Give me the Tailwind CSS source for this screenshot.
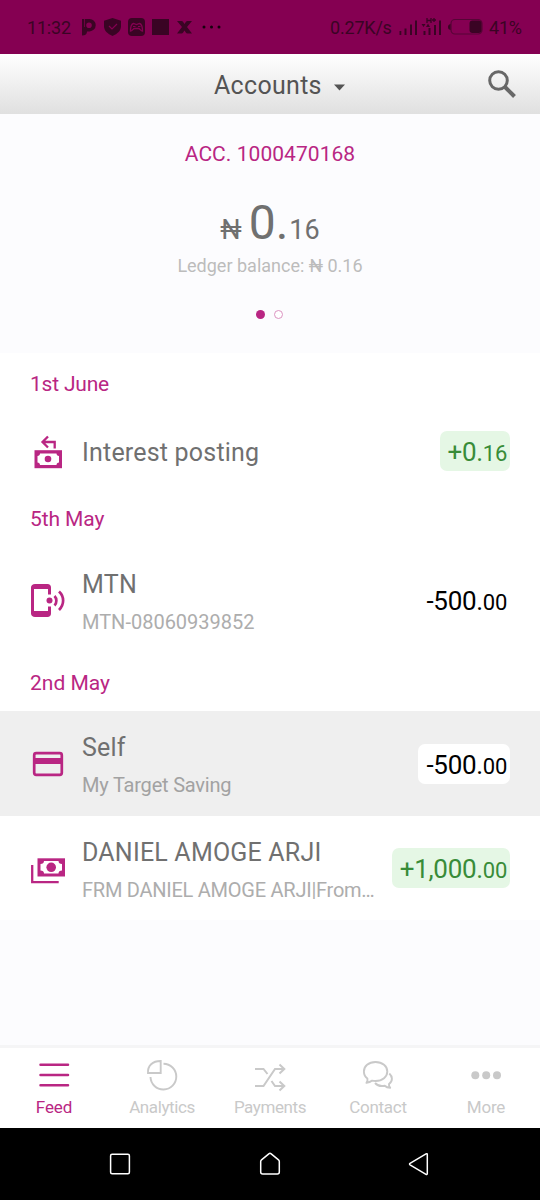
<!DOCTYPE html>
<html lang="en">
<head>
<meta charset="utf-8">
<title>Accounts</title>
<script src="https://cdn.jsdelivr.net/npm/@tailwindcss/browser@4"></script>
</head>
<body class="w-[540px] h-[1200px] flex flex-col overflow-hidden bg-[#fcfcfe] font-['Roboto','Noto_Sans',sans-serif] whitespace-nowrap">
  <!-- Status bar -->
  <div class="h-[54px] shrink-0 bg-[#850052] text-[#3a0424] flex items-center justify-between pl-[27px] pr-[18px] text-[18px] leading-[54px] tracking-[-0.2px]">
    <div class="flex items-center">
      <span class="w-[44px] pt-px">11:32</span>
      <svg class="ml-[9px]" width="146" height="20" viewBox="80 17 146 20" fill="#3a0424">
        <path fill-rule="evenodd" d="M82 19h7.500a6.200 6.200 0 0 1 0 12.400H87c0 2.500-1.500 4-5 4zM89 22.500a2.800 2.800 0 1 0 0 5.600 2.800 2.800 0 0 0 0-5.600z"/>
        <path d="M84.500 19v8" stroke="#850052" stroke-width=".7"/>
        <path d="M112.500 18l8.500 2.800v5.500c0 4.500-3.500 7.500-8.500 9.700-5-2.200-8.500-5.200-8.500-9.700v-5.500z"/><path d="M109 26l3 3 5-5" fill="none" stroke="#850052" stroke-width="1.200"/>
        <rect x="128" y="18" width="17" height="18" rx="4"/>
        <path d="M130.500 31c0-4 1-7 3-7.500l3 1 3-1c2 .5 3 3.500 3 7.500-2 0-2.500-2.500-4-2.500h-4c-1.500 0-2 2.500-4 2.500z" fill="none" stroke="#850052" stroke-width="1.300"/><path d="M133 26.500h2.500M138 26.500h2.500" stroke="#850052" stroke-width="1.200"/>
        <rect x="152" y="19" width="17" height="16"/>
        <path d="M177 21h4.500c1.500 0 2 1.500 3 3 1-1.500 1.500-3 3-3h4.500l-5 6 5 6.500h-4.500c-1.500 0-2-1.500-3-3-1 1.500-1.500 3-3 3H177l5-6.500z"/>
        <g fill="#16010d"><circle cx="204" cy="27" r="1.500"/><circle cx="211.500" cy="27" r="1.500"/><circle cx="219" cy="27" r="1.500"/></g>
      </svg>
    </div>
    <div class="flex items-center">
      <span class="w-[62px] pt-px">0.27K/s</span>
      <svg class="ml-[6px] mr-[5px]" width="86" height="20" viewBox="398 17 86 20" fill="#3a0424">
        <path d="M399.500 31h1.800v4h-1.800zM404.500 28.500h2v6.500h-2zM410 24.500h2V35h-2zM415 20.500h2V35h-2z"/>
        <path d="M423.500 31h2v4h-2zM428.500 28h2v7h-2zM434 25h2v10h-2zM439 20.500h2V35h-2zM421.500 24h4l-2 3zM426 27l2-3.500 2 3.500z"/>
        <path d="M427 18v5M431 18v5M427 20.500h4M434 18v4M432 20h4" stroke="#3a0424" stroke-width="1.300" fill="none"/>
        <rect x="451" y="19.500" width="31" height="14.500" rx="4" fill="none" stroke="#560536" stroke-width="1.200"/>
        <path d="M450.500 24v6c-2-.5-2.500-1.500-2.500-3s.5-2.500 2.500-3z"/><rect x="469.500" y="20.500" width="12" height="12.500" rx="3"/>
      </svg>
      <span class="w-[33px] pt-px">41%</span>
    </div>
  </div>

  <!-- Header -->
  <header class="h-[60px] shrink-0 bg-linear-to-b from-white to-[#e0e0e0] flex items-center pl-[214px] pr-[24px] text-[#545454]">
    <span class="text-[25px] leading-[60px] tracking-[0.3px] w-[108px] pt-[4px]">Accounts</span>
    <svg class="ml-[11px] mt-[6px]" width="13" height="7" viewBox="0 0 13 7"><path d="M1 .5h11L6.500 6.500z" fill="#545454"/></svg>
    <svg class="ml-auto" width="28" height="28" viewBox="0 0 28 28" fill="none" stroke="#686868"><circle cx="10.500" cy="10.500" r="8.800" stroke-width="3"/><path d="M17 17l9.500 9.500" stroke-width="4"/></svg>
  </header>

  <!-- Balance -->
  <section class="h-[239px] shrink-0 flex flex-col items-center pt-[27px]">
    <div class="text-[21px] leading-[26px] text-[#b92683] tracking-[0.05px]">ACC. 1000470168</div>
    <div class="mt-[27px] h-[58px] leading-[58px] flex items-baseline text-[#707070]">
      <span class="text-[27px] leading-[58px]">₦</span><span class="ml-[7px] text-[48px] leading-[58px]">0.</span><span class="ml-px text-[27px] leading-[58px]">16</span>
    </div>
    <div class="mt-[2px] text-[18px] leading-[24px] text-[#bcbcbc]">Ledger balance: ₦ 0.16</div>
    <div class="mt-[32px] mr-px flex gap-[9px]">
      <span class="size-[9px] rounded-full bg-[#b92683]"></span><span class="size-[9px] rounded-full border border-[#dc93c1] bg-white"></span>
    </div>
  </section>

  <!-- Feed -->
  <main class="h-[567px] shrink-0 bg-white text-[#707070]">
    <h2 class="h-[61px] leading-[63px] pl-[30px] text-[21px] tracking-[-0.2px] text-[#b92683]">1st June</h2>
    <div class="h-[74px] flex items-center pl-[30px] pr-[30px]">
      <svg width="36" height="36" viewBox="30 433 36 36" fill="none" stroke="#b92683">
        <path d="M48 436.500l-5.500 5.500 5.500 5.500M42.500 442h12.200v6.500" stroke-width="2.300"/>
        <path d="M34.500 450.200h27.500v18H34.500z" fill="#b92683" stroke="none"/>
        <path d="M40 453.500h16.500c0 1.500 1 2.500 2.500 2.500v6.500c-1.500 0-2.500 1-2.500 2.500H40c0-1.500-1-2.500-2.500-2.500V456c1.500 0 2.500-1 2.500-2.500z" fill="white" stroke="none"/>
        <circle cx="48" cy="459" r="3.300" fill="#b92683" stroke="none"/>
      </svg>
      <div class="ml-[16px] text-[25px] leading-[30px] pt-[3px] tracking-[0.2px]">Interest posting</div>
      <div class="ml-auto h-[40px] rounded-[7px] bg-[#e5f7e5] text-[#388c38] pl-[8px] pr-[3px] text-[26px] leading-[42px] tracking-[-0.3px]">+0.<span class="text-[22px]">16</span></div>
    </div>
    <h2 class="h-[61px] leading-[63px] pl-[30px] text-[21px] tracking-[-0.1px] text-[#b92683]">5th May</h2>
    <div class="h-[104px] flex items-center pl-[30px] pr-[30px]">
      <svg width="36" height="36" viewBox="30 583 36 36" fill="none" stroke="#b92683">
        <path fill="#b92683" stroke="none" fill-rule="evenodd" d="M35 584h12.500c2.200 0 3.500 1.500 3.500 3.500v7h-3V589H34v22h14v-4.500h3v7c0 2-1.300 3.500-3.500 3.500H35c-2.200 0-4-1.500-4-3.500v-26c0-2 1.800-3.500 4-3.500z"/>
        <circle cx="49.500" cy="600.500" r="3" fill="#b92683" stroke="none"/>
        <path d="M54.500 596c2.500 2.500 2.500 7 0 9.500M59 591.500c5.500 5 5.500 13 0 18.500" stroke-width="2.700"/>
      </svg>
      <div class="ml-[16px] pt-[2px]"><div class="text-[25px] leading-[30px] tracking-[0.3px]">MTN</div><div class="mt-[10px] text-[20px] leading-[24px] text-[#adadad]">MTN-08060939852</div></div>
      <div class="ml-auto h-[40px] text-black pr-[3px] text-[26px] leading-[40px] tracking-[-0.3px]">-500.<span class="text-[22px]">00</span></div>
    </div>
    <h2 class="h-[58px] leading-[60px] pl-[30px] text-[21px] text-[#b92683]">2nd May</h2>
    <div class="h-[105px] flex items-center pl-[30px] pr-[30px] bg-[#efefef]">
      <svg width="36" height="36" viewBox="30 746 36 36"><rect x="34.200" y="753.200" width="27.600" height="21.600" rx="2" fill="none" stroke="#b92683" stroke-width="2.700"/><path d="M34 758h28v6H34z" fill="#b92683"/></svg>
      <div class="ml-[16px] pt-[3px]"><div class="text-[25px] leading-[30px] tracking-[0.2px]">Self</div><div class="mt-[10px] text-[20px] leading-[24px] tracking-[-0.2px] text-[#a2a2a2]">My Target Saving</div></div>
      <div class="ml-auto h-[40px] rounded-[7px] bg-white text-black pl-[8px] pr-[3px] text-[26px] leading-[42px] tracking-[-0.3px]">-500.<span class="text-[22px]">00</span></div>
    </div>
    <div class="h-[104px] flex items-center pl-[30px] pr-[30px]">
      <svg width="36" height="36" viewBox="30 851 36 36">
        <path d="M32.200 866v17.200h26.500" fill="none" stroke="#b92683" stroke-width="2.300"/>
        <path d="M37.500 859.300H65v18.200H37.500z" fill="#b92683"/>
        <path d="M44 862h14.500c0 2 1.300 3 3.500 3v6.500c-2.200 0-3.500 1-3.500 3H44c0-2-1.300-3-3.500-3V865c2.200 0 3.500-1 3.500-3z" fill="white"/>
        <circle cx="51.200" cy="868.300" r="4.800" fill="#b92683"/>
      </svg>
      <div class="ml-[16px] pt-[4px]"><div class="text-[25px] leading-[30px] tracking-[0.2px]">DANIEL AMOGE ARJI</div><div class="mt-[10px] text-[20px] leading-[24px] tracking-[-0.25px] text-[#adadad]">FRM DANIEL AMOGE ARJI|From…</div></div>
      <div class="ml-auto h-[40px] rounded-[7px] bg-[#e5f7e5] text-[#388c38] pl-[8px] pr-[3px] text-[26px] leading-[42px] tracking-[-0.3px]">+1,000.<span class="text-[22px]">00</span></div>
    </div>
  </main>

  <!-- Tabs -->
  <nav class="mt-auto h-[83px] shrink-0 border-t-3 border-[#f5f5f6] bg-white grid grid-cols-5 text-[17px] leading-[22px] tracking-[-0.4px] text-[#c9c9c9] text-center">
    <div class="flex flex-col items-center pt-[10px] text-[#b92683]">
      <svg width="36" height="34" viewBox="36 1058 36 34" stroke="#b92683" stroke-width="2.500" stroke-linecap="round"><path d="M40.500 1064.700h27.500M40.500 1075h27.500M40.500 1085.300h27.500"/></svg>
      <span class="mt-[4px] tracking-[-0.1px]">Feed</span>
    </div>
    <div class="flex flex-col items-center pt-[10px]">
      <svg width="36" height="34" viewBox="144 1058 36 34" fill="none" stroke="#c9c9c9" stroke-width="1.900"><path d="M160.700 1061v12h-12.700c-.5-7.500 4.500-12 12.700-12zM163.500 1063.700a12.900 12.900 0 1 1-13 13.300"/></svg>
      <span class="mt-[4px]">Analytics</span>
    </div>
    <div class="flex flex-col items-center pt-[10px]">
      <svg width="36" height="34" viewBox="252 1058 36 34" fill="none" stroke="#c9c9c9" stroke-width="2"><path d="M255 1069h8.500l4 5M255 1086h8.500l11.500-17h9.500M271.500 1081l3.500 5h9.500M279.500 1064.500l4.800 4.500-4.800 4.500M279.500 1081.500l4.800 4.500-4.800 4.500"/></svg>
      <span class="mt-[4px]">Payments</span>
    </div>
    <div class="flex flex-col items-center pt-[10px]">
      <svg width="36" height="34" viewBox="360 1058 36 34" fill="none" stroke="#c9c9c9" stroke-width="1.900" stroke-linejoin="round"><path d="M375.500 1062c7 0 11.800 4.300 11.800 9.500s-4.800 9.500-11.800 9.500c-1.200 0-2.300-.1-3.300-.4-1.700 1.400-3.500 2-5.700 2.200 1-1.500 1.300-2.700.9-4.300-2.300-1.700-3.500-4.200-3.500-7 0-5.200 4.600-9.500 11.600-9.500zM389.300 1073.500c3.300 3 3.800 7.500-.3 10.500-.3 1.500.2 2.500 1.200 3.800-2.500-.1-4-.7-5.500-2.100-3.700.8-7.200.1-9.700-2.700"/></svg>
      <span class="mt-[4px] tracking-[-0.3px]">Contact</span>
    </div>
    <div class="flex flex-col items-center pt-[10px]">
      <svg width="36" height="34" viewBox="468 1058 36 34" fill="#c9c9c9"><circle cx="475.300" cy="1075.300" r="4"/><circle cx="486.200" cy="1075.300" r="4"/><circle cx="497" cy="1075.300" r="4"/></svg>
      <span class="mt-[4px] tracking-[-0.2px]">More</span>
    </div>
  </nav>

  <!-- System navigation -->
  <div class="h-[72px] shrink-0 bg-black flex items-center justify-center gap-[122px]">
    <svg width="28" height="28" viewBox="106 1150 28 28" fill="none" stroke="white" stroke-width="1.500"><rect x="110.600" y="1154.200" width="18.800" height="19.600" rx="1.500"/></svg>
    <svg width="28" height="28" viewBox="256 1150 28 28" fill="none" stroke="white" stroke-width="1.500" stroke-linejoin="round"><path d="M260.700 1161.500c0-.8.300-1.300.8-1.700l7.300-6c.8-.6 1.600-.6 2.400 0l7.300 6c.5.400.8.900.8 1.700v10.500c0 1.300-.7 2-2 2h-14.600c-1.300 0-2-.7-2-2z"/></svg>
    <svg width="28" height="28" viewBox="406 1150 28 28" fill="none" stroke="white" stroke-width="1.500" stroke-linejoin="round"><path d="M410 1163.300l16-9.500c.7-.4 1.300 0 1.300.7v19.200c0 .7-.6 1.100-1.300.7l-16-9.600c-.6-.4-.6-1.100 0-1.500z"/></svg>
  </div>
</body>
</html>
